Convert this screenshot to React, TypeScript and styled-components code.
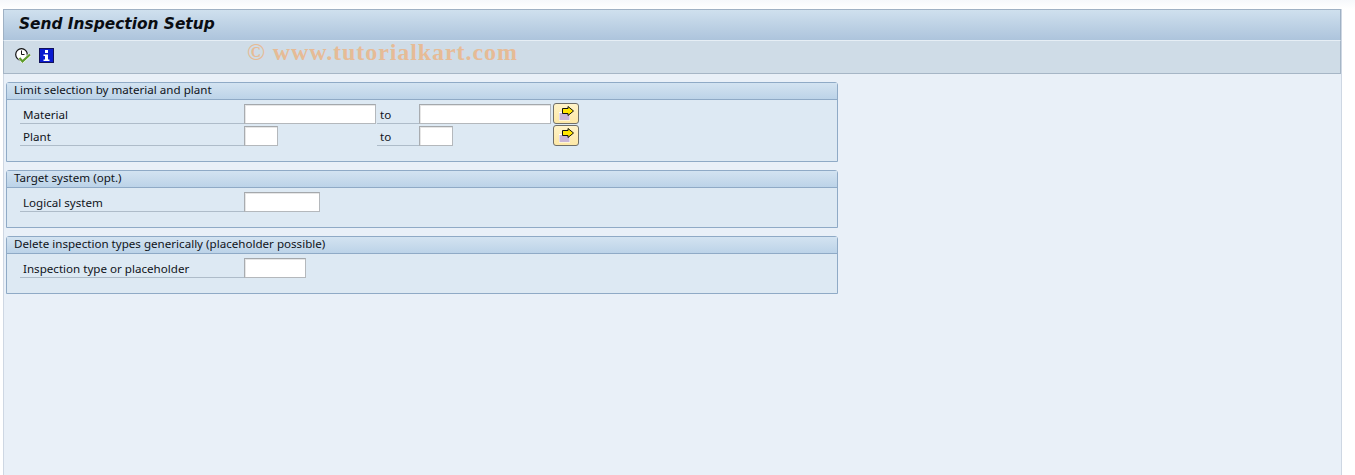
import styled, { createGlobalStyle } from "styled-components";

const GlobalStyle = createGlobalStyle`
  html, body {
    margin: 0;
    padding: 0;
    background: #ffffff;
  }
  body {
    font-family: "Noto Sans", "Open Sans", sans-serif;
    font-size: 11.6px;
    color: #10141a;
    overflow: hidden;
  }
`;

const Page = styled.div`
  width: 1355px;
  height: 475px;
  padding: 9px 14px 0 3px;
  box-sizing: border-box;
  background: linear-gradient(#f6f8fb, #ffffff 9px);
`;

const Window = styled.div`
  position: relative;
  height: 466px;
  margin-right: -1px;
  background: #e9f0f8;
  border-right: 1px solid #ced7e3;
  border-left: 1px solid #ced7e3;
`;

const TitleBar = styled.div`
  height: 31px;
  margin-left: -1px;
  padding: 0 0 2px 15px;
  display: flex;
  align-items: center;
  background: linear-gradient(#cfe0ee, #adc4dc);
  border: 1px solid #9fb1c4;
  border-bottom: none;
  box-sizing: border-box;
`;

const Title = styled.h1`
  margin: 0;
  font-family: "DejaVu Sans", sans-serif;
  font-size: 15.4px;
  font-weight: 700;
  font-style: italic;
  color: #0a0d12;
  white-space: nowrap;
`;

const Toolbar = styled.div`
  height: 34px;
  margin-left: -1px;
  padding: 7px 0 0 11px;
  display: flex;
  align-items: flex-start;
  gap: 8px;
  background: #cfdce7;
  border: 1px solid #a6b6c6;
  border-top: 1px solid #e6eef5;
  box-sizing: border-box;
`;

const ToolIcon = styled.svg<{ $width: number }>`
  display: block;
  width: ${(p) => p.$width}px;
  height: 15px;
  flex: none;
`;

const Watermark = styled.div`
  position: absolute;
  left: 243px;
  top: 30px;
  font-family: "Liberation Serif", serif;
  font-size: 24px;
  font-weight: 700;
  letter-spacing: 0.92px;
  color: #e6bb96;
  white-space: nowrap;
`;

const Content = styled.div`
  display: flex;
  flex-direction: column;
  gap: 8px;
  padding: 8px 0 0 2px;
  width: 832px;
`;

const Group = styled.section<{ $height: number }>`
  height: ${(p) => p.$height}px;
  background: #dde9f3;
  border: 1px solid #8faac6;
  border-top-left-radius: 3px;
  border-top-right-radius: 3px;
  box-sizing: border-box;
`;

const GroupHeader = styled.h2`
  margin: 0;
  height: 17px;
  padding: 0 0 3px 7px;
  display: flex;
  align-items: center;
  font-size: 11.6px;
  font-weight: 400;
  line-height: 14px;
  background: linear-gradient(#d3e3f1, #bcd3e8);
  border-bottom: 1px solid #8faac6;
  box-sizing: border-box;
`;

const Rows = styled.div`
  display: flex;
  flex-direction: column;
  gap: 2px;
  padding: 4px 0 0 13px;
`;

const Row = styled.div`
  display: flex;
  align-items: flex-end;
  height: 20px;
`;

const Label = styled.label`
  width: 224px;
  height: 20px;
  padding: 1px 0 0 3px;
  display: flex;
  align-items: center;
  border-bottom: 1px solid #aebcc9;
  box-sizing: border-box;
  flex: none;
`;

const Input = styled.input<{ $width: number }>`
  display: block;
  width: ${(p) => p.$width}px;
  height: 20px;
  padding: 0;
  background: #ffffff;
  border: 1px solid #b4b8bc;
  border-top-color: #a4a8ac;
  border-left-color: #a8acb0;
  box-shadow: inset 1px 1px 0 #e6e6e6;
  box-sizing: border-box;
  flex: none;
`;

const InputSlot = styled.div<{ $width: number }>`
  width: ${(p) => p.$width}px;
  flex: none;
`;

const ToLabel = styled(Label)`
  width: 42px;
`;

const RangeButton = styled.button`
  width: 26px;
  height: 21px;
  margin-left: 2px;
  padding: 0 0 0 1px;
  display: flex;
  align-items: center;
  justify-content: center;
  background: linear-gradient(#fff3c8, #fde8a6);
  border: 1px solid #6f6e68;
  border-radius: 3px;
  box-sizing: border-box;
  flex: none;
`;

const RangeIcon = styled.svg`
  display: block;
  width: 16px;
  height: 15px;
`;

function ClockCheckIcon() {
  return (
    <ToolIcon $width={16} viewBox="0 0 16 15">
      <circle cx="6.5" cy="6.5" r="5.8" fill="#ffffff" stroke="#111111" strokeWidth="1.2" />
      <path d="M6.5 2.5v4h3" fill="none" stroke="#111111" strokeWidth="1" />
      <path d="M4.5 10l3 3.4L15 6.5" fill="none" stroke="#ffffff" strokeWidth="3.4" />
      <path d="M4.5 10l3 3.4L15 6.5" fill="none" stroke="#5d9b2c" strokeWidth="2.2" />
    </ToolIcon>
  );
}

function InfoIcon() {
  return (
    <ToolIcon $width={15} viewBox="0 0 15 15">
      <rect x="0" y="0" width="15" height="15" fill="#0a1ad0" />
      <rect x="0.5" y="0.5" width="14" height="14" fill="none" stroke="#11115a" />
      <rect x="6" y="2" width="3" height="3" fill="#ffffff" />
      <path d="M4.5 6.5H9V11.5H10.5V13H4.5V11.5H6V8H4.5z" fill="#ffffff" />
    </ToolIcon>
  );
}

function MoreIcon() {
  return (
    <RangeIcon viewBox="0 0 16 15">
      <rect x="0" y="6" width="11" height="8.5" fill="#ffffff" />
      <rect x="0.5" y="7" width="10" height="7" fill="#c9b6d6" />
      <path d="M3.5 2.5H9V0.5L14.5 5 9 9.5V7.5H3.5z" fill="#ffe600" stroke="#111111" strokeWidth="1" />
    </RangeIcon>
  );
}

export default function App() {
  return (
    <>
      <GlobalStyle />
      <Page>
        <Window>
          <TitleBar>
            <Title>Send Inspection Setup</Title>
          </TitleBar>
          <Toolbar>
            <ClockCheckIcon />
            <InfoIcon />
          </Toolbar>
          <Watermark>© www.tutorialkart.com</Watermark>
          <Content>
            <Group $height={80}>
              <GroupHeader>Limit selection by material and plant</GroupHeader>
              <Rows>
                <Row>
                  <Label>Material</Label>
                  <InputSlot $width={133}>
                    <Input $width={132} />
                  </InputSlot>
                  <ToLabel>to</ToLabel>
                  <InputSlot $width={132}>
                    <Input $width={132} />
                  </InputSlot>
                  <RangeButton type="button">
                    <MoreIcon />
                  </RangeButton>
                </Row>
                <Row>
                  <Label>Plant</Label>
                  <InputSlot $width={133}>
                    <Input $width={34} />
                  </InputSlot>
                  <ToLabel>to</ToLabel>
                  <InputSlot $width={132}>
                    <Input $width={34} />
                  </InputSlot>
                  <RangeButton type="button">
                    <MoreIcon />
                  </RangeButton>
                </Row>
              </Rows>
            </Group>
            <Group $height={58}>
              <GroupHeader>Target system (opt.)</GroupHeader>
              <Rows>
                <Row>
                  <Label>Logical system</Label>
                  <Input $width={76} />
                </Row>
              </Rows>
            </Group>
            <Group $height={58}>
              <GroupHeader>Delete inspection types generically (placeholder possible)</GroupHeader>
              <Rows>
                <Row>
                  <Label>Inspection type or placeholder</Label>
                  <Input $width={62} />
                </Row>
              </Rows>
            </Group>
          </Content>
        </Window>
      </Page>
    </>
  );
}
